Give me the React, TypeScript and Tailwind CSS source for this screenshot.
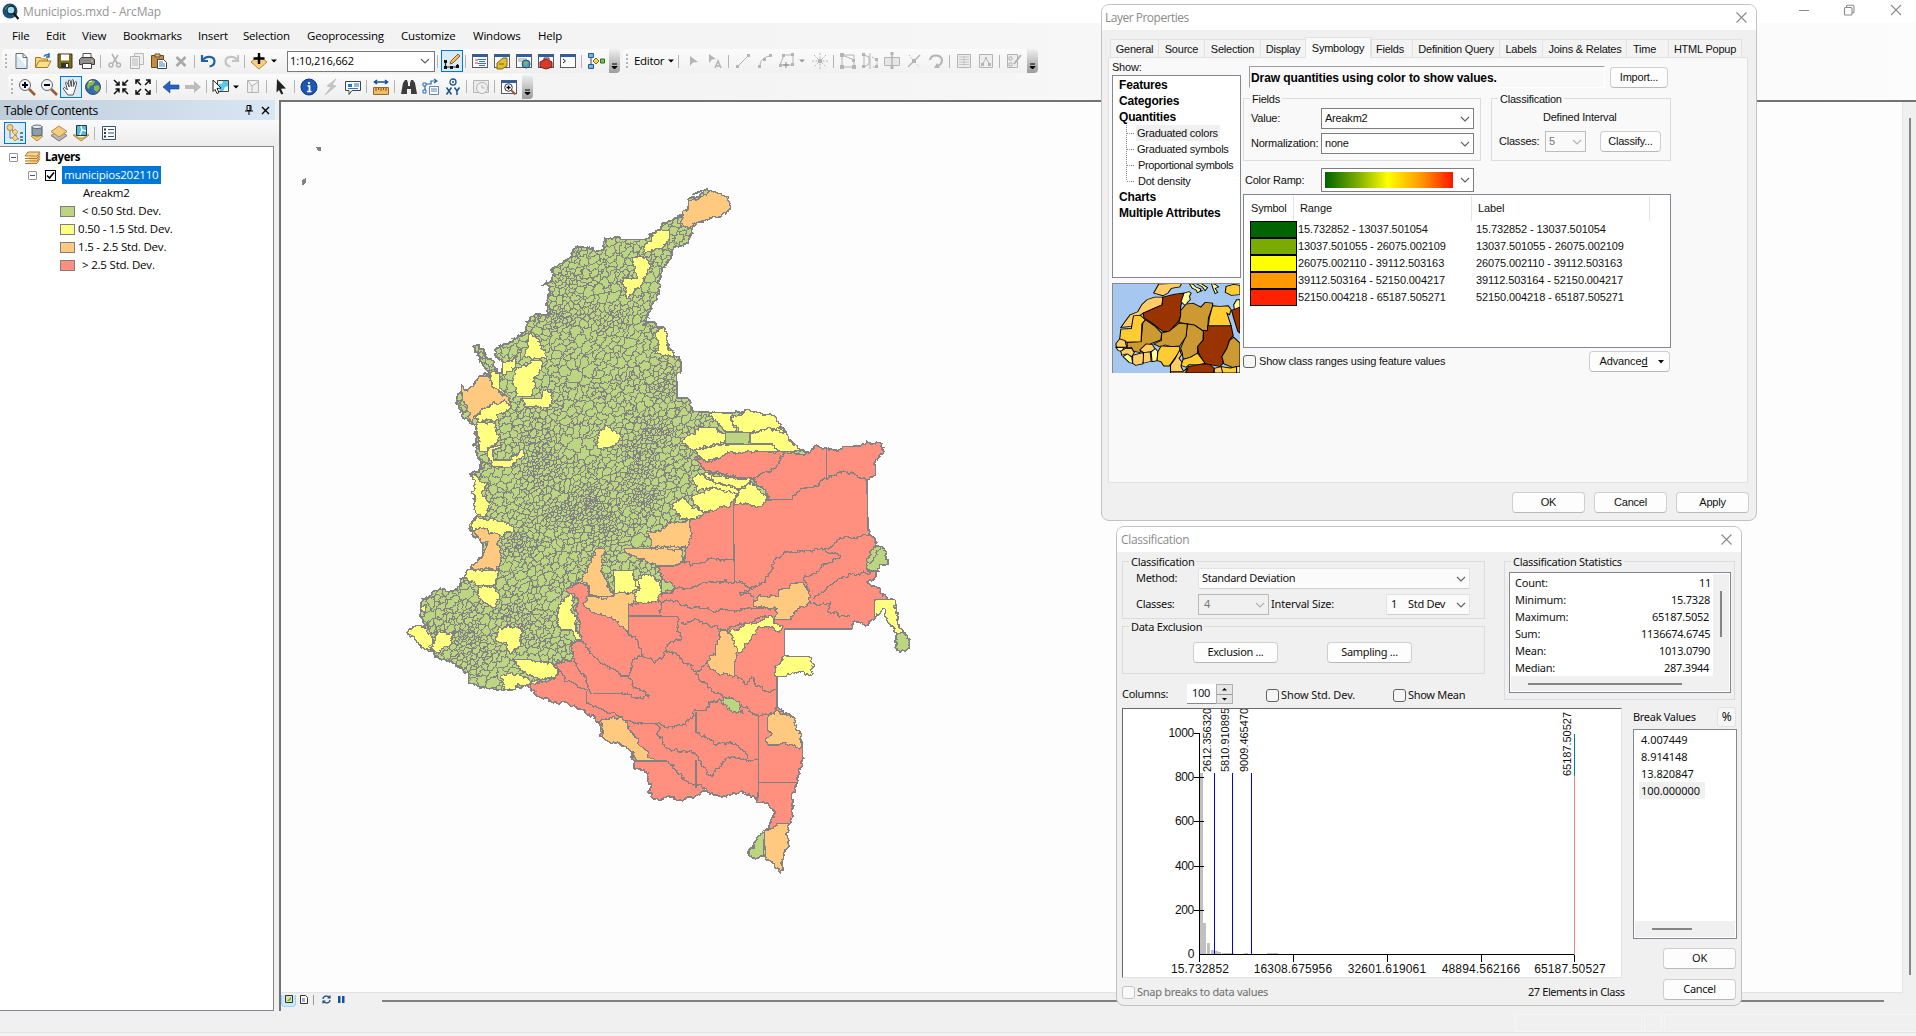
import type { ReactNode } from 'react';

/* ---------- map geometry ---------- */

type Pt = [number, number];

const parse = (s: string, dy = 0): Pt[] =>
  s.trim().split(/\s+/).map((p) => {
    const [x, y] = p.split(',').map(Number);
    return [390 + x / 2.904, 170 + (y + dy) / 3] as Pt;
  });

const hash = (a: number, b: number, c: number, d: number) => {
  const v = Math.sin(a * 12.9898 + b * 78.233 + c * 37.719 + d * 4.581) * 43758.5453;
  return v - Math.floor(v) - 0.5;
};

// Midpoint displacement; symmetric in its end points so that shared borders coincide.
function wiggle(a: Pt, b: Pt, amp: number, minLen: number): Pt[] {
  const dx = b[0] - a[0];
  const dy = b[1] - a[1];
  const len = Math.hypot(dx, dy);
  if (len < minLen) return [a];
  const swap = a[0] > b[0] || (a[0] === b[0] && a[1] > b[1]);
  const [p, q] = swap ? [b, a] : [a, b];
  const r = (n: number) => Math.round(n);
  const h = hash(r(p[0]), r(p[1]), r(q[0]), r(q[1])) * amp * Math.min(len, 3.2 + len * 0.08) * (swap ? -1 : 1);
  const m: Pt = [(a[0] + b[0]) / 2 - (dy / len) * h, (a[1] + b[1]) / 2 + (dx / len) * h];
  return [...wiggle(a, m, amp, minLen), ...wiggle(m, b, amp, minLen)];
}

function roughPath(pts: Pt[], closed: boolean) {
  const out: Pt[] = [];
  const n = closed ? pts.length : pts.length - 1;
  for (let i = 0; i < n; i++) {
    const a = pts[i];
    const b = pts[(i + 1) % pts.length];
    const straight = Math.abs(a[0] - b[0]) < 1.2 || Math.abs(a[1] - b[1]) < 1.2;
    out.push(...(straight ? [a] : wiggle(a, b, 0.95, 1.8)));
  }
  if (!closed) out.push(pts[pts.length - 1]);
  return 'M' + out.map((p) => p[0].toFixed(1) + ' ' + p[1].toFixed(1)).join('L') + (closed ? 'Z' : '');
}

const COUNTRY =
  '925,62 945,66 975,80 989,108 988,118 960,140 915,152 888,160 875,195 858,223 832,228 815,262 790,300 780,340 775,385 755,425 735,465 768,455 775,470 797,472 808,520 830,560 845,575 845,605 832,610 834,683 866,685 880,724 925,727 1000,728 1045,720 1112,738 1150,785 1195,842 1212,846 1235,827 1268,835 1320,830 1365,828 1385,814 1423,818 1432,850 1410,885 1410,915 1385,930 1388,1080 1398,1097 1412,1128 1430,1130 1448,1173 1418,1202 1385,1238 1420,1252 1442,1285 1462,1290 1475,1340 1490,1385 1505,1425 1500,1440 1480,1447 1468,1425 1475,1390 1445,1345 1430,1310 1408,1340 1378,1365 1345,1355 1340,1377 1145,1377 1145,1460 1123,1500 1123,1612 1175,1650 1180,1680 1198,1725 1198,1760 1183,1837 1162,1960 1133,2107 1090,2055 1068,2064 1043,2056 1087,1982 1120,1925 1090,1900 1067,1890 1020,1863 965,1880 915,1855 885,1880 850,1893 815,1880 778,1888 752,1870 758,1842 750,1810 708,1795 710,1773 700,1745 650,1715 615,1700 605,1655 580,1630 540,1610 505,1595 490,1602 430,1580 397,1545 345,1560 285,1555 228,1538 228,1510 195,1490 140,1460 112,1445 50,1388 75,1368 105,1370 88,1330 90,1300 125,1265 195,1260 210,1225 235,1190 268,1155 270,1120 240,1090 230,1075 255,1035 245,920 232,910 262,895 255,850 238,825 255,815 250,770 232,758 210,740 192,700 195,680 210,665 208,645 225,665 258,620 290,615 268,580 245,545 252,525 275,555 300,580 305,615 325,610 328,575 305,540 345,520 395,480 405,445 425,432 465,435 455,400 468,350 455,340 470,325 480,290 525,250 555,230 600,243 620,240 625,205 655,200 670,208 740,208 790,165 845,140 865,120 868,92 900,75';

const RED =
  '885,862 930,875 975,850 1060,843 1145,850 1212,846 1235,827 1268,835 1320,830 1365,828 1385,814 1423,818 1432,850 1410,885 1410,915 1385,930 1388,1080 1398,1097 1412,1128 1385,1175 1390,1205 1418,1202 1385,1238 1420,1252 1442,1285 1430,1310 1408,1340 1378,1365 1345,1355 1340,1377 1145,1377 1145,1460 1123,1500 1123,1612 1175,1650 1180,1680 1198,1725 1198,1760 1183,1837 1162,1960 1125,1960 1087,1982 1120,1925 1090,1900 1067,1890 1020,1863 965,1880 915,1855 885,1880 850,1893 815,1880 778,1888 752,1870 758,1842 750,1810 708,1795 710,1773 700,1745 650,1715 615,1700 605,1655 580,1630 540,1610 505,1595 490,1602 430,1580 397,1545 480,1525 490,1505 470,1485 530,1465 525,1430 555,1415 530,1270 515,1265 545,1235 570,1245 580,1280 700,1290 780,1275 790,1240 782,1190 850,1175 870,1050 910,1030 1000,990 1100,990 1060,935 1055,925 930,910';

const ORANGE_N = [
  '925,62 945,66 975,80 989,108 988,118 960,140 915,152 880,160 872,175 850,170 845,150 865,120 868,92 900,85',
  '208,645 225,665 258,620 285,620 300,655 335,675 350,712 325,695 290,705 255,735 240,760 230,755 225,715 210,690',
];
const ORANGE_S = [
  '745,95 800,80 870,60 872,95 860,145 820,150 757,145 760,120',
  '680,145 757,145 850,150 845,185 820,198 770,198 735,175 700,170',
  '600,145 620,145 615,200 650,285 580,290 572,250 545,240 575,200',
  '570,290 650,288 705,280 715,305 692,312 692,398 650,360 600,340 562,315',
  '1055,300 1075,285 1128,290 1130,268 1160,265 1163,250 1200,248 1222,310 1190,320 1165,357 1115,360 1125,325 1055,320',
  '960,390 975,390 1008,455 1000,495 1002,528 950,520 917,490 945,465 945,435',
  '1120,622 1175,660 1180,690 1196,735 1190,748 1150,728 1130,735 1098,735 1092,715 1108,705 1095,690 1095,660',
  '610,665 668,650 710,704 768,783 712,783 700,755 650,725 618,712',
  '1087,992 1125,970 1162,970 1133,1117 1090,1065',
  '245,92 265,85 310,100 318,140 322,185 300,210 232,205 270,165 285,125 262,128',
];
const YELLOW_N = [
  '735,248 750,215 785,178 812,188 810,215 780,238',
  '700,262 735,260 757,285 735,335 700,375 688,385 678,345 685,325 718,320 712,290',
  '765,485 797,472 808,520 828,560 800,555 770,550 778,510',
  '402,495 435,508 440,530 452,565 435,570 390,555 400,525',
  '328,575 365,562 365,590 350,605 328,615',
  '410,570 440,572 435,610 418,625 412,680 370,680 357,645 362,605 395,590',
  '378,685 440,685 445,660 468,665 475,700 445,720 425,708 390,710',
  '285,630 300,605 318,622 318,655 330,670 300,658',
  '250,740 290,705 325,695 350,712 345,725 310,735 315,750 255,755',
  '252,760 305,755 318,800 305,820 280,845 265,845',
  '285,830 325,825 298,840 300,870 350,870 388,830 390,860 345,892 300,890 282,860',
  '610,780 632,767 672,800 655,822 620,840 597,825 605,805',
  '925,735 945,728 995,730 990,745 1015,785 970,783',
  '988,745 1045,720 1112,738 1148,787 1080,778 1050,788 1012,785',
  '850,820 900,772 945,772 975,795 972,820 885,842',
  '1048,790 1080,778 1150,787 1195,842 1135,845 1110,822 1048,820',
  '885,842 975,825 1110,822 1135,845 1060,843 975,850 925,875',
  '905,910 1045,925 1050,935 1010,958 950,940',
  '880,930 905,912 950,940 1015,958 1010,975 950,955 890,965',
  '875,990 915,962 950,955 1010,975 995,995 910,1028',
  '1000,1000 1025,955 1050,935 1075,965 1102,990 1070,1010 1000,1005',
  '820,1000 850,980 910,1028 880,1050 840,1045',
  '245,912 262,935 288,940 265,970 295,1000 275,1040 255,1035',
];
const YELLOW_S = [
  '230,80 255,45 300,60 345,70 358,90 330,108 280,95 245,92',
  '215,235 235,205 270,212 318,210 305,255 255,258',
  '258,262 300,255 320,290 305,322 262,300',
  '50,398 75,378 108,385 110,365 122,410 125,440 112,455',
  '112,440 145,395 185,400 180,430 140,458',
  '305,420 315,385 340,375 385,395 380,430 350,465 340,432',
  '490,320 525,280 532,340 555,420 540,420 528,390 495,390',
  '355,480 410,478 490,510 480,535 435,542 415,525 375,512',
  '320,530 375,522 435,545 370,550 355,572 335,568',
  '650,210 705,212 710,240 725,265 705,280 652,288',
  '712,245 750,225 788,245 780,295 720,308 705,280 725,270',
  '978,400 1030,370 1110,350 1115,370 1140,385 1130,397 1070,380 1010,455',
  '1408,300 1460,297 1475,350 1490,395 1472,400 1445,355 1435,325 1408,350',
  '88,325 105,315 103,338',
];
const GREEN_N = ['975,787 1045,787 1042,823 975,820'];
const GREEN_S = [
  '1385,190 1430,140 1448,183 1418,212 1390,210',
  '1470,435 1475,400 1490,398 1505,435 1500,450 1480,457',
  '960,600 985,592 1015,605 1025,640 985,625',
  '1043,1066 1087,995 1085,1065 1068,1074',
  '788,235 828,265 790,285',
];
const BORDERS_N = [
  '1145,850 1125,895 1100,905 1055,925',
  '1055,925 1065,965 1100,990 1165,988 1195,955 1230,952 1265,925 1310,908 1385,930',
  '997,990 1000,1235',
  '1267,835 1267,925',
  '925,908 990,918 1050,922',
];
const BORDERS_S = [
  '840,185 870,192 930,175 1000,185',
  '790,285 830,265 905,250 1000,245 1060,262 1090,240 1110,200 1115,180 1165,155 1265,150 1320,110 1398,105',
  '1265,150 1308,170 1250,205 1200,235 1215,290',
  '1228,295 1270,260 1320,230 1418,212',
  '1055,262 1015,280 1055,295',
  '692,315 780,300 905,325 975,330 1055,325 1125,322',
  '692,348 780,348 835,350 845,410 810,430 800,455 765,485 735,470 692,398',
  '845,370 890,358 975,390 1060,358 1110,350',
  '780,340 790,310',
  '1228,310 1280,305 1270,335 1335,348',
  '800,455 835,465 870,490 900,540 945,580 990,595 1070,650 1120,630',
  '1002,528 1030,550 1050,530 1060,555 1105,580 1123,570',
  '890,515 917,490',
  '555,425 600,475 670,528 690,528 705,480 735,470',
  '690,528 750,590 720,595 670,580 588,580',
  '530,475 560,520 588,580',
  '470,490 505,540 570,575 570,605 665,650 735,670 775,672 820,683 860,675 890,632 920,630 925,612 960,600',
  '775,672 797,740 875,752 910,800 937,830 980,772 1070,780',
  '889,698 945,735 990,730 1040,775',
  '805,783 870,850 915,865',
  '712,783 805,783',
  '1070,650 1070,847 1068,900',
  '1070,847 1183,847',
  '889,635 889,698',
  '889,780 889,865',
  '1145,387 1145,470',
];
const LETICIA = '1115,500 1150,468 1218,470 1228,490 1232,520 1190,515 1150,530 1125,530';

// Centres of small municipalities: x, y, spread x, spread y
const CLUSTERS = [
  [535, 325, 45, 35], [490, 440, 45, 40], [550, 250, 20, 22], [430, 880, 60, 130],
  [590, 1000, 65, 80], [720, 880, 60, 100], [740, 980, 55, 60], [630, 1060, 60, 70],
  [800, 660, 35, 60], [230, 1400, 50, 50], [250, 1480, 40, 30], [370, 1350, 50, 60],
  [380, 1120, 50, 60], [520, 1030, 60, 70], [640, 450, 60, 30], [780, 780, 50, 50],
];

function spacing(x: number, y: number) {
  let g = 0;
  for (const [cx, cy, sx, sy] of CLUSTERS) {
    const v = Math.exp(-(((x - cx) / sx) ** 2 + ((y - cy) / sy) ** 2) * 0.7);
    if (v > g) g = v;
  }
  return 8.4 - 5 * g;
}

const SKEW = 0.34;

function municipalMesh() {
  let seed = 20211;
  const rnd = () => {
    seed = (seed * 16807) % 2147483647;
    return seed / 2147483647;
  };
  const pts: Pt[] = [];
  for (let i = 0; i < 19000; i++) {
    const u = 40 + rnd() * 920;
    const v = 130 + rnd() * 1440;
    const s = spacing(u, v);
    if (rnd() > (3.4 / s) ** 2) continue;
    const r = s * 0.34;
    const p: Pt = [390 + u / 2.904, 170 + v / 3];
    if (pts.every((q) => Math.abs(q[0] - p[0]) > r || Math.abs(q[1] - p[1]) > r)) pts.push(p);
  }
  const norm = (a: Pt) => a[0] * a[0] + a[1] * a[1] + 2 * SKEW * a[0] * a[1];
  let d = '';
  for (let i = 0; i < pts.length; i++) {
    const p = pts[i];
    let poly: Pt[] = [[p[0] - 20, p[1] - 20], [p[0] + 20, p[1] - 20], [p[0] + 20, p[1] + 20], [p[0] - 20, p[1] + 20]];
    for (let k = 0; k < pts.length; k++) {
      const q = pts[k];
      const ex = q[0] - p[0];
      const ey = q[1] - p[1];
      if (k === i || Math.abs(ex) > 40 || Math.abs(ey) > 40) continue;
      const dx = ex + SKEW * ey;
      const dy = ey + SKEW * ex;
      const c = (norm(q) - norm(p)) / 2;
      const next: Pt[] = [];
      for (let j = 0; j < poly.length; j++) {
        const a = poly[j];
        const b = poly[(j + 1) % poly.length];
        const sa = dx * a[0] + dy * a[1] - c;
        const sb = dx * b[0] + dy * b[1] - c;
        if (sa <= 0) next.push(a);
        if (sa <= 0 !== sb <= 0) {
          const t = sa / (sa - sb);
          next.push([a[0] + (b[0] - a[0]) * t, a[1] + (b[1] - a[1]) * t]);
        }
      }
      poly = next;
    }
    const out: Pt[] = [];
    poly.forEach((a, j) => out.push(...wiggle(a, poly[(j + 1) % poly.length], 1.1, 2.4)));
    d += 'M' + out.map((a) => a[0].toFixed(1) + ' ' + a[1].toFixed(1)).join('L') + 'Z';
  }
  return d;
}

const MESH = municipalMesh();
const OUTLINE = roughPath(parse(COUNTRY), true);
const closed = (list: string[], dy: number) => list.map((s) => roughPath(parse(s, dy), true)).join('');
const open = (list: string[], dy: number) => list.map((s) => roughPath(parse(s, dy), false)).join('');

function ColombiaMap() {
  return (
    <svg className="block" width="1621" height="891" viewBox="281 102 1621 891" shapeRendering="crispEdges" stroke="#828282" strokeWidth="1.15">
      <defs>
        <clipPath id="land">
          <path d={OUTLINE} />
        </clipPath>
      </defs>
      <path d={OUTLINE} fill="#bcd580" strokeWidth="1.6" />
      <path d={MESH} fill="none" clipPath="url(#land)" strokeWidth="1" />
      <path d={roughPath(parse(RED), true)} fill="#ff8f7f" strokeWidth="1.4" />
      <path d={open(BORDERS_N, 0) + open(BORDERS_S, 990)} fill="none" strokeWidth="1.25" />
      <path d={closed([LETICIA], 990)} fill="#ffff80" />
      <path d={closed(YELLOW_N, 0) + closed(YELLOW_S, 990)} fill="#ffff80" />
      <path d={closed(ORANGE_N, 0) + closed(ORANGE_S, 990)} fill="#ffca80" />
      <path d={closed(GREEN_N, 0) + closed(GREEN_S, 990)} fill="#bcd580" />
      <path d="M692 195l5-3 6-2-5 3z M317 148l3 0 0 2-2 0z M302 184l1-4 2-1 0 4-2 2z M541 286l5-2 1-4M494 370l3 2 0-4" fill="#828282" />
    </svg>
  );
}

/* ---------- toolbar icons ---------- */

const I = ({ children, on, w = 18 }: { children: ReactNode; on?: boolean; w?: number }) => (
  <span className={'flex h-[22px] w-[22px] shrink-0 items-center justify-center ' + (on ? 'border border-[#0078d7] bg-[#d9ebf9]' : '')}>
    <svg width={w} height={w} viewBox="0 0 18 18" fill="none" className="block shrink-0">
      {children}
    </svg>
  </span>
);
const Sep = () => <span className="ml-[2px] mr-[3px] h-[13px] w-px shrink-0 bg-[#b4b4b4]" />;
const Caret = () => (
  <svg width="8" height="8" viewBox="0 0 8 8" className="shrink-0">
    <path d="M1 2.500h6L4 5.500z" fill="#000" />
  </svg>
);
const CaretDim = () => (
  <svg width="8" height="8" viewBox="0 0 8 8" className="shrink-0">
    <path d="M1 2.500h6L4 5.500z" fill="#999" />
  </svg>
);
const Overflow = () => (
  <span className="ml-[2px] flex h-[24px] w-[11px] shrink-0 flex-col items-center justify-end rounded-r-sm bg-gradient-to-b from-[#efefef] to-[#9c9c9c] pb-[3px]">
    <svg width="7" height="7" viewBox="0 0 7 7">
      <path d="M1 1h5M1 3.500h5L3.500 6z" stroke="#000" strokeWidth="1" fill="#000" />
    </svg>
  </span>
);
const Grip = () => (
  <span className="mx-[3px] flex h-[15px] w-[2px] shrink-0 flex-col justify-between">
    <i className="h-[2px] bg-[#b5b5b5]" /><i className="h-[2px] bg-[#b5b5b5]" /><i className="h-[2px] bg-[#b5b5b5]" /><i className="h-[2px] bg-[#b5b5b5]" />
  </span>
);
const Chevron = ({ dim }: { dim?: boolean }) => (
  <svg width="10" height="6" viewBox="0 0 10 6" className="shrink-0">
    <path d="M1 1l4 4 4-4" fill="none" stroke={dim ? '#b0b0b0' : '#606060'} strokeWidth="1.1" />
  </svg>
);

const Win = ({ children }: { children?: ReactNode }) => (
  <>
    <rect x="1.500" y="2.500" width="15" height="13" fill="#fdfdfd" stroke="#5a5a5a" />
    <path d="M2 3h14v2H2z" fill="#1f5fbf" />
    {children}
  </>
);

const layerD = 'M9 2l8 5.500-8 5.500-8-5.500z';

function StandardBar() {
  return (
    <div className="flex h-[24px] items-center rounded bg-gradient-to-b from-[#fbfbfb] to-[#efefef]">
      <Grip />
      <I><path d="M4 1.500h7l4 4v11H4z" fill="#fff" stroke="#5b6b7b" /><path d="M5 3l9 11v2H5z" fill="#dce9f5" /><path d="M11 1.500v4h4" stroke="#5b6b7b" /></I>
      <I><path d="M1.500 15.500v-10h5l1 1.500h6v2" fill="#f5d47c" stroke="#a47c20" /><path d="M1.500 15.500l3.500-6.500h12l-3.500 6.500z" fill="#fbdf90" stroke="#a47c20" /><path d="M10 4.500c1-2 3-2 5-1.500M15 1v4h-3" stroke="#2266aa" strokeWidth="1.400" /></I>
      <I><path d="M2 2h14v14H3l-1-1z" fill="#7c6c1c" stroke="#3a3520" /><path d="M5 2.500h8v6H5z" fill="#fff" /><path d="M5 11h8v5H5z" fill="#333" /><path d="M10 12h2v3h-2z" fill="#fff" /></I>
      <I><path d="M5 6V1.500h8V6" fill="#fff" stroke="#555" /><path d="M1.500 7.500l2-2h11l2 2v5h-15z" fill="#8f8f8f" stroke="#3c3c3c" /><path d="M4.500 11.500h9v5h-9z" fill="#fff" stroke="#444" /><path d="M13 9h2" stroke="#e8c020" strokeWidth="1.500" /></I>
      <Sep />
      <I><path d="M6 2l5 9M12 3L7 11" stroke="#b4b4b4" strokeWidth="1.600" /><circle cx="5" cy="13" r="2" stroke="#b4b4b4" strokeWidth="1.500" /><circle cx="12.500" cy="13" r="2" stroke="#b4b4b4" strokeWidth="1.500" /></I>
      <I><path d="M6.500 1.500h9v11h-9z" fill="#f0f0f0" stroke="#b8b8b8" /><path d="M2.500 4.500h9v12h-9z" fill="#f0f0f0" stroke="#b0b0b0" /><path d="M4 7h6M4 9h6M4 11h6M4 13h6" stroke="#bbb" /></I>
      <I><path d="M1.500 3.500h12v12h-12z" fill="#c98a3a" stroke="#6b4a20" /><path d="M5 2h5v3H5z" fill="#e6c040" stroke="#555" /><path d="M7.500 7.500h6l3 3v6h-9z" fill="#fff" stroke="#345" /><path d="M9 10h4M9 12h6M9 14h6" stroke="#4a78b8" /></I>
      <I><path d="M4.500 5l9 9M13.500 5l-9 9" stroke="#a8a8a8" strokeWidth="2.600" /></I>
      <Sep />
      <I><path d="M2 3v6h6M2.500 8.500C6 3 14 4 14.500 9c0 3-2 5-5 5.500" stroke="#2263a8" strokeWidth="2.200" /></I>
      <I><path d="M16 3v6h-6M15.500 8.500C12 3 4 4 3.500 9c0 3 2 5 5 5.500" stroke="#c4c4c4" strokeWidth="2.200" /></I>
      <Sep />
      <I><path d="M9 4l8 6-8 7-8-7z" fill="#f6ce7e" stroke="#b98a35" /><path d="M9 1v11M3.500 6.500h11" stroke="#000" strokeWidth="2.400" /></I>
      <Caret />
      <div className="ml-[9px] flex h-[21px] w-[148px] items-center justify-between border border-[#7a7a7a] bg-white pl-[2px] pr-[4px] text-[11px] tracking-[-0.1px]">
        <span>1:10,216,662</span>
        <Chevron />
      </div>
      <Sep />
      <I on><path d="M2.500 9v6h12v-3" stroke="#222" strokeWidth="1.200" /><path d="M1 8h3v3H1zM1 14h3v3H1zM7 14h3v3H7zM13 13h3v3h-3z" fill="#111" /><path d="M7 12l1-3 7-7 2 2-7 7z" fill="#f0bd62" stroke="#8a5a20" /></I>
      <Sep />
      <I><Win><path d="M4 8h3M4 11h3" stroke="#d33" /><path d="M7 7.500h8M8 9.500h6M7 11.500h8M8 13.500h6" stroke="#3a70c0" /></Win></I>
      <I><Win><path d="M4 11l6-5h4v8l-5 3H4z" fill="#e2be2e" stroke="#7d6510" /><path d="M6 12h5" stroke="#7d6510" /></Win></I>
      <I><Win><path d="M3 7h9M3 9h5" stroke="#999" /><circle cx="11" cy="12" r="4" fill="#4f9ac8" stroke="#1d4e78" /><path d="M9 11l2-2 2 2-2 3z" fill="#6fbf58" /></Win></I>
      <I><Win><path d="M3 10l6-3 6 3v5l-6 2-6-2z" fill="#d83a30" stroke="#7c1712" /><path d="M7 8V6h5v2" stroke="#7c1712" /></Win></I>
      <I><Win><path d="M4 7l2.500 2L4 11" stroke="#222" /></Win></I>
      <Sep />
      <I><path d="M4 4v10M6 9h6" stroke="#444" /><path d="M1.500 1.500h5v4h-5zM1.500 12.500h5v4h-5z" fill="#6fb5ea" stroke="#225a92" /><path d="M9 6l3 3-3 3-3-3z" fill="#f4d35c" stroke="#8a6a18" /><path d="M13.500 7h4v4h-4z" fill="#7cc757" stroke="#2c6a1c" /></I>
      <Overflow />
    </div>
  );
}

const G = '#b4b4b4';
function EditorBar() {
  return (
    <div className="ml-[3px] flex h-[24px] items-center rounded bg-gradient-to-b from-[#fbfbfb] to-[#f1f1f1]">
      <Grip />
      <span className="ml-[3px] w-[33px] text-[11.500px] tracking-[-0.3px]">Editor</span>
      <Caret />
      <span className="w-px" />
      <Sep />
      <I><path d="M6 4l8 6-5 .5L6 14z" fill={G} /></I>
      <I><path d="M3 2l7 5-4 .5L3 11z" fill={G} /><path d="M9 16l3-7 3 7M10 14h4" stroke={G} strokeWidth="1.500" /></I>
      <Sep />
      <I><path d="M4 14L14 4" stroke={G} /><path d="M2 13h3v3H2zM13 2h3v3h-3z" fill={G} /></I>
      <I><path d="M4 14c0-6 4-9 10-10" stroke={G} /><path d="M2 13h3v3H2zM7 6h3v3H7zM13 2h3v3h-3z" fill={G} /></I>
      <I><path d="M6 3h9v10H2z" stroke={G} /><path d="M4 2h3v3H4zM13 1h3v3h-3zM13 11h3v3h-3zM1 12h3v3H1z" fill={G} /><path d="M8 10v6M5 13h6" stroke="#888" /></I>
      <CaretDim />
      <span className="w-[3px]" />
      <I><path d="M9 1v16M1 9h16M3 3l12 12M15 3L3 15" stroke={G} strokeDasharray="2 1.500" /><path d="M7 7h4v4H7z" fill={G} /></I>
      <Sep />
      <I><path d="M3 3v12h12V8zM3 3h12v5" stroke={G} /><path d="M1 1h4v4H1zM13 13h4v4h-4zM1 13h4v4H1zM13 7h3v3h-3z" fill={G} /></I>
      <I><path d="M3 3v12l5-3V5zM9 1v16" stroke={G} /><path d="M11 5l5 3v7h-5" stroke={G} strokeDasharray="2 1" /><path d="M1 1h3v3H1zM1 13h3v3H1zM14 6h3v3h-3zM14 13h3v3h-3z" fill={G} /></I>
      <I><path d="M1.500 5.500h15v8h-15z" fill="#e6e6e6" stroke={G} /><path d="M9 1v16" stroke={G} strokeWidth="1.500" /><path d="M7.500 0h3v3h-3zM7.500 14h3v3h-3z" fill={G} /></I>
      <I><path d="M3 15L15 3" stroke={G} strokeWidth="1.400" /><path d="M4 3l10 12" stroke={G} strokeDasharray="1.500 1.500" /><path d="M7 7h4v4H7z" fill={G} /></I>
      <I><path d="M3 8c1-6 11-6 12 0 0 3-2 5-4 6" stroke={G} strokeWidth="2" /><path d="M13 16H7l3-5z" fill={G} /></I>
      <Sep />
      <I><path d="M2.500 2.500h13v13h-13z" fill="#eee" stroke={G} /><path d="M4 5h10M4 7.500h10M4 10h10M4 12.500h10M9 4v10" stroke="#c4c4c4" /></I>
      <I><path d="M2.500 2.500h13v13h-13z" fill="#eee" stroke={G} /><path d="M5 13l4-7 4 7" stroke={G} /><path d="M4 11h3v3H4zM8 5h2v2H8zM11 11h3v3h-3z" fill={G} /></I>
      <Sep />
      <I><path d="M2.500 2.500h10v13h-10z" fill="#eee" stroke={G} /><path d="M4 5h3v3H4zM4 11h3v3H4z" stroke={G} /><path d="M9 12l7-9" stroke={G} strokeWidth="2" /></I>
      <Overflow />
    </div>
  );
}

function ToolsBar() {
  return (
    <div className="flex h-[25px] w-[525px] items-center rounded bg-gradient-to-b from-[#fbfbfb] to-[#efefef]">
      <Grip />
      <I><circle cx="7" cy="7" r="5.500" fill="#eef4fa" stroke="#666" /><path d="M4 7h6M7 4v6" stroke="#000" strokeWidth="2" /><path d="M11 11l6 6" stroke="#9b5a3a" strokeWidth="2.600" /></I>
      <I><circle cx="7" cy="7" r="5.500" fill="#eef4fa" stroke="#666" /><path d="M4 7h6" stroke="#000" strokeWidth="2" /><path d="M11 11l6 6" stroke="#9b5a3a" strokeWidth="2.600" /></I>
      <I on><path d="M6 17l-4.500-6c-.5-1.500 1-2 2-1l2 2L3.500 5c0-1.200 1.300-1.300 1.700-.3l2 4.300L6.500 3c0-1.300 1.500-1.300 1.800 0l1 5.500.5-6c.2-1.300 1.700-1.100 1.700.2l-.2 6 1.700-4.500c.5-1.200 1.900-.7 1.700.5L13 11.500c-.3 2-1.500 3.500-2 5.500z" fill="#fff" stroke="#444" strokeWidth=".9" /></I>
      <I><circle cx="9" cy="9" r="7.500" fill="#2f6cb0" stroke="#37506a" /><path d="M4 5c2-3 6-3 7-1l-2 3-3 1-1 3-2-2zM10 8l4-1 2 3-3 4-3-2z" fill="#8fb83e" /><path d="M5 4l3-1" stroke="#fff" /></I>
      <Sep />
      <I><path d="M2 2l5 5M7 3.500V7H3.500M16 2l-5 5M11 3.500V7h3.500M2 16l5-5M3.500 11H7v3.500M16 16l-5-5M14.500 11H11v3.500" stroke="#111" strokeWidth="1.500" /></I>
      <I><path d="M7 7L2 2M2 6V2h4M11 7l5-5M12 2h4v4M7 11l-5 5M2 12v4h4M11 11l5 5M16 12v4h-4" stroke="#111" strokeWidth="1.500" /></I>
      <Sep />
      <span className="w-px" />
      <I><path d="M1 9l7-6v4h9v4H8v4z" fill="#2a62c4" stroke="#174089" strokeWidth=".6" /></I>
      <I><path d="M17 9l-7-6v4H1v4h9v4z" fill="#bcbcbc" /></I>
      <Sep />
      <I><path d="M5.500 2.500h11v11h-11z" fill="#eef6f8" stroke="#444" /><path d="M6 6h4l1-3h5v5l-3 1-2 4H8z" fill="#56cbe6" /><path d="M1 2l8 8-4 .5 2 4-2 1-2-4-2 2z" fill="#fff" stroke="#222" /></I>
      <Caret />
      <span className="w-[5px]" />
      <I><path d="M3.500 2.500h11v12h-11zM4 3l4 5 6-4M8 8v6" stroke={G} fill="#eee" /></I>
      <Sep />
      <I><path d="M5 1l9 9.500-5 .3 2.300 5-2 .8L7 12l-2.500 2.500z" fill="#222" /></I>
      <Sep />
      <I><circle cx="9" cy="9" r="8" fill="#1c57b4" stroke="#123a7a" /><path d="M9 4v2M7.500 8H9.500v5M7 13.500h4.500" stroke="#fff" strokeWidth="1.700" /></I>
      <I><path d="M14 1L5 8l4 1-6 8 11-9-4-1z" fill="#c6c6c6" stroke="#b0b0b0" strokeWidth=".6" /></I>
      <I><path d="M1.500 3.500h15v9H8l-3 4v-4H1.500z" fill="#f6fbff" stroke="#444" /><path d="M4 6h4v3H4z" fill="#2f77bf" /><path d="M10 6h5M10 8h5M4 10.500h10" stroke="#2f77bf" /></I>
      <Sep />
      <I><path d="M3 4h12M5 2L2.500 4 5 6M13 2l2.500 2L13 6" stroke="#15509a" strokeWidth="1.600" /><path d="M1.500 9.500h15v7h-15z" fill="#f0bb68" stroke="#9a6a24" /><path d="M4 10v3M6.500 10v2M9 10v3M11.500 10v2M14 10v3" stroke="#7a5218" /></I>
      <Sep />
      <I><path d="M3 5l2-3h2l1 3v3h2V5l1-3h2l2 3 2 11h-6v-5H7v5H1z" fill="#3c3c3c" /></I>
      <I><path d="M3 13V6h6V3h6M12 1l3 2-3 2" stroke="#2a69a8" strokeWidth="1.200" /><path d="M7.500 8.500h9v8h-9z" fill="#fff" stroke="#5a88b0" /><path d="M9 11h6M9 13h6" stroke="#5a88b0" /><path d="M1 5h3v3H1zM1 12h3v3H1z" fill="#fff" stroke="#2a69a8" /></I>
      <I><circle cx="9" cy="4" r="3" stroke="#1b5590" strokeWidth="1.300" /><path d="M8.500 3.500h1v1h-1z" stroke="#1b5590" /><path d="M2.500 9.500l5 7M7.500 9.500l-5 7M10.500 9.500l2.500 3.500 2.500-3.500M13 13v4" stroke="#1b5590" strokeWidth="1.500" /></I>
      <Sep />
      <I><path d="M1.500 2.500h15v12h-15z" fill="#ececec" stroke={G} /><circle cx="10" cy="10" r="5.500" fill="#f0f0f0" stroke={G} /><path d="M10 7v3h3" stroke={G} /></I>
      <Sep />
      <I><Win><circle cx="8.500" cy="9.500" r="3.800" fill="#fff" stroke="#333" /><path d="M6.500 9.500h4M8.500 7.500v4" stroke="#000" strokeWidth="1.300" /><path d="M11.500 12.500l4 4" stroke="#9b5a3a" strokeWidth="2" /></Win></I>
      <Overflow />
    </div>
  );
}

/* ---------- table of contents ---------- */

const Minus = () => (
  <span className="flex h-[9px] w-[9px] shrink-0 items-center justify-center rounded-[1px] border border-[#969696] bg-white">
    <i className="h-px w-[5px] bg-[#3a5a9a]" />
  </span>
);

const TOC_CLASSES: [string, string, string][] = [
  ['bg-[#bcd580]', 'ml-[7px]', '< 0.50 Std. Dev.'],
  ['bg-[#ffff80]', 'ml-[3px]', '0.50 - 1.5 Std. Dev.'],
  ['bg-[#ffca80]', 'ml-[3px]', '1.5 - 2.5 Std. Dev.'],
  ['bg-[#ff8f7f]', 'ml-[7px]', '> 2.5 Std. Dev.'],
];

function Toc() {
  return (
    <aside className="flex w-[279px] shrink-0 flex-col text-[11.500px] tracking-[-0.2px]">
      <div className="flex h-[20px] w-[275px] items-center bg-gradient-to-r from-[#bfcddb] to-[#d9e6f4] pl-[4px] pr-[5px] pt-px">
        <span className="grow text-[12px] tracking-[-0.4px]">Table Of Contents</span>
        <svg width="8" height="11" viewBox="0 0 8 11" className="mr-[8px]"><path d="M2 .500h4v5H2zM5 .500v5M0 6h8M4 6v4" stroke="#000" fill="none" /></svg>
        <svg width="9" height="9" viewBox="0 0 9 9"><path d="M1 1l7 7M8 1L1 8" stroke="#000" strokeWidth="1.400" /></svg>
      </div>
      <div className="flex h-[26px] items-center bg-gradient-to-b from-[#fafafa] to-[#ececec] pl-[4px]">
        <I on><path d="M4 6v8h4M6 6l4 3M10 10v5h3" stroke="#777" /><circle cx="4" cy="3.500" r="3" fill="#f5cf88" stroke="#b58a3a" /><path d="M9 5l3 3-3 3-3-3zM9 11l3 3-3 3-3-3z" fill="#f5cf88" stroke="#b58a3a" strokeWidth=".8" /><path d="M14 9h3M14 13h3M14 16h3" stroke="#26609c" strokeWidth="1.400" /></I>
        <I><path d="M3 12l6-3 6 3-6 5z" fill="#f2c468" stroke="#b58a3a" /><path d="M4 2.500h10v8c-2 2-8 2-10 0z" fill="#8d9dac" stroke="#4a5866" /><ellipse cx="9" cy="2.800" rx="5" ry="1.800" fill="#e6edf3" stroke="#5d6b78" /></I>
        <I><path d="M9 6l8 5.500L9 17 1 11.500z" fill="#b9b9b9" stroke="#777" /><path d={layerD} fill="#f6cd80" stroke="#b58a3a" /></I>
        <I><path d="M1 11h4v3h8v-3h4l-8 6z" fill="#f2c468" stroke="#b58a3a" /><path d="M4.500 1.500h10v10h-10z" fill="#49bce0" stroke="#333" /><path d="M9 2l1 4 4 1M10 6l-2 5" stroke="#fff" strokeWidth="1.500" /></I>
        <Sep />
        <I><path d="M2.500 2.500h13v13h-13z" fill="#fff" stroke="#35556f" /><path d="M8 5.500h6M8 9h6M8 12.500h6" stroke="#35556f" /><path d="M4 4.500h2v2H4zM4 8h2v2H4zM4 11.500h2v2H4z" fill="#333" /></I>
      </div>
      <div className="flex w-[274px] grow flex-col border border-l-0 border-[#828790] bg-white pt-px leading-[18px]">
        <div className="flex h-[18px] items-center pl-[9px]">
          <Minus />
          <svg width="17" height="15" viewBox="0 0 17 15" className="ml-[6px]"><path d="M1 11h12l3-5M1 13.500h12l3-5M1 8.500h12l3-5M4 2h12l-3 4H1z" stroke="#b07a28" fill="#f8d38b" /></svg>
          <b className="ml-[4px] tracking-[-0.45px]">Layers</b>
        </div>
        <div className="flex h-[18px] items-center pl-[28px]">
          <Minus />
          <span className="ml-[8px] mr-[6px] flex h-[11px] w-[11px] items-center justify-center border border-black">
            <svg width="9" height="9" viewBox="0 0 9 9"><path d="M1 4.500l2.500 2.500L8 1.500" stroke="#000" strokeWidth="1.600" fill="none" /></svg>
          </span>
          <span className="h-[18px] w-[99px] whitespace-nowrap bg-[#0078d7] pl-[2px] tracking-[-0.22px] text-white">municipios202110</span>
        </div>
        <div className="h-[18px] pl-[83px]">Areakm2</div>
        {TOC_CLASSES.map(([bg, ml, t]) => (
          <div key={t} className="flex h-[18px] items-center pl-[60px]">
            <span className={'h-[11px] w-[15px] border border-[#7e7e7e] ' + bg} />
            <span className={ml}>{t}</span>
          </div>
        ))}
      </div>
    </aside>
  );
}

/* ---------- dialog controls ---------- */

const Btn = ({ children, className }: { children: ReactNode; className: string }) => (
  <span className={'flex shrink-0 items-center justify-center rounded-[4px] border border-[#cfcfcf] border-b-[#b9b9b9] bg-[#fdfdfd] ' + className}>{children}</span>
);
const Box = ({ dim }: { dim?: boolean }) => (
  <span className={'h-[13px] w-[13px] shrink-0 rounded-[3px] border ' + (dim ? 'border-[#c4c4c4] bg-[#f9f9f9]' : 'border-[#626262] bg-[#f6f6f6]')} />
);
const Group = ({ title, className, children }: { title: string; className: string; children: ReactNode }) => (
  <div className={'relative shrink-0 border border-[#dcdcdc] ' + className}>
    <span className="absolute left-[6px] top-[-7px] whitespace-nowrap bg-inherit px-[2px] leading-[14px]">{title}</span>
    {children}
  </div>
);
const CloseX = () => (
  <svg width="11" height="11" viewBox="0 0 11 11"><path d="M.5.5l10 10M10.500.5l-10 10" stroke="#8a8a8a" strokeWidth="1.100" /></svg>
);

const TABS: [string, string][] = [
  ['General', 'w-[48px]'], ['Source', 'w-[46px]'], ['Selection', 'w-[56px]'], ['Display', 'w-[45px]'], ['Symbology', ''],
  ['Fields', 'w-[41px] pr-[4px]'], ['Definition Query', 'w-[87px]'], ['Labels', 'w-[43px]'], ['Joins & Relates', 'w-[84px] pl-px'], ['Time', 'w-[42px] pr-[6px]'], ['HTML Popup', 'w-[74px]'],
];

const RANGES: [string, string][] = [
  ['bg-[#006400]', '15.732852 - 13037.501054'],
  ['bg-[#7aab00]', '13037.501055 - 26075.002109'],
  ['bg-[#ffff00]', '26075.002110 - 39112.503163'],
  ['bg-[#ff9900]', '39112.503164 - 52150.004217'],
  ['bg-[#ff2200]', '52150.004218 - 65187.505271'],
];

const AFRICA: [string, string][] = [
  ['#ffcc66', '128,310 140,283 195,280 190,292 170,296 162,310 150,318'],
  ['#ffff99', '212,281 222,284 228,292 240,298 238,304 244,302 232,309 228,300 220,296'],
  ['#ffff99', '228,281 240,281 256,294 250,303 244,292'],
  ['#ffff99', '265,281 274,284 282,292 274,296 280,308 274,312 270,300'],
  ['#ffcc33', '300,290 318,284 333,287 333,315 312,317 298,308'],
  ['#ffff99', '318,345 325,330 333,330 333,352 320,362'],
  ['#993300', '313,362 333,352 333,430 328,425 318,385'],
  ['#ffcc66', '150,322 148,345 103,370 95,378 75,410 50,413 60,395 72,375 90,366 100,344 112,330 130,322'],
  ['#993300', '150,322 175,314 200,310 198,325 195,335 192,352 192,378 187,395 165,425 150,425 124,400 105,385 103,370 130,355 148,345'],
  ['#ffff99', '200,310 212,306 217,310 213,320 215,330 208,338 205,350 193,336'],
  ['#cc9933', '192,362 205,343 222,340 240,352 250,338 268,340 268,350 258,385 256,422 245,422 225,406 210,402 188,398 192,378'],
  ['#ffcc33', '268,348 285,350 305,348 312,360 308,375 302,370 312,408 258,408 260,385'],
  ['#993300', '256,408 312,408 317,438 308,450 302,475 290,500 293,520 285,530 262,524 250,522 235,490 232,470 246,450 246,422 256,422'],
  ['#cc9933', '208,403 225,406 246,424 245,450 232,470 232,490 215,502 198,508 196,490 192,475 204,440'],
  ['#cc9933', '147,430 165,424 188,400 208,403 205,440 190,468 170,470 155,465 145,472 128,462 146,452'],
  ['#cc9933', '108,390 130,408 147,430 145,450 120,462 105,470 95,488 80,484 75,472 65,475 65,457 98,455 102,400'],
  ['#ffcc33', '78,392 80,378 96,376 108,390 100,402 98,455 65,457 47,450 50,418 75,416'],
  ['#ffcc66', '47,447 60,452 64,472 40,472 38,462'],
  ['#ffff99', '38,472 58,474 52,484 44,482'],
  ['#ffcc66', '50,484 62,475 76,476 82,488 76,500 62,492 52,496'],
  ['#ffff99', '55,500 66,492 76,502 78,520 70,518'],
  ['#ffcc66', '78,496 102,488 106,502 102,522 85,526 78,520'],
  ['#ffcc66', '95,480 110,462 125,464 132,478 120,486 104,488'],
  ['#ffcc66', '104,488 120,486 122,514 103,520'],
  ['#ffff99', '122,486 132,476 138,485 136,512 124,515'],
  ['#ffcc33', '138,485 146,468 165,470 190,470 190,485 178,505 165,528 152,528 145,515 136,512'],
  ['#ffcc66', '190,480 194,495 188,505 196,518 193,530 199,544 168,544 168,525 178,508'],
  ['#ffcc33', '193,526 198,508 215,502 232,490 238,500 250,520 232,525 212,524 205,532'],
  ['#ffcc66', '168,544 199,544 206,535 204,549 168,549'],
  ['#993300', '205,549 210,530 232,525 248,522 262,524 272,535 270,549'],
  ['#cc9933', '302,475 308,452 318,442 333,460 333,530 315,532 295,522 290,500'],
  ['#ffcc33', '288,530 310,534 325,530 325,549 290,549'],
  ['#ffcc66', '272,549 272,535 288,530 292,549'],
  ['#ffff99', '325,530 333,528 333,549 325,549'],
];

function LayerProperties() {
  return (
    <section className="absolute left-[1101px] top-[4px] flex h-[517px] w-[656px] flex-col overflow-hidden rounded-[8px] border border-[#c2c2c2] bg-[#f0f0f0] font-['Liberation_Sans',sans-serif] text-[11px] tracking-[-0.22px] text-[#111]">
      <header className="flex h-[25px] shrink-0 items-center justify-between bg-white pl-[3px] pr-[9px]">
        <span className="font-['Open_Sans',sans-serif] text-[12px] tracking-[-0.5px] text-[#8c8c8c]">Layer Properties</span>
        <CloseX />
      </header>
      <nav className="flex h-[27px] shrink-0 items-end pl-[8px]">
        {TABS.map(([t, w]) =>
          t === 'Symbology' ? (
            <span key={t} className="relative z-10 mb-[-1px] flex h-[21px] w-[66px] justify-center border border-b-0 border-[#e2e2e2] bg-[#f9f9f9] pt-[2px]">{t}</span>
          ) : (
            <span key={t} className={'flex h-[18px] items-center justify-center whitespace-nowrap border-l border-t border-[#e2e2e2] bg-[#f3f3f3] pt-px last:border-r ' + w}>{t}</span>
          ),
        )}
      </nav>
      <div className="ml-[6px] flex h-[426px] w-[640px] shrink-0 border border-[#e2e2e2] bg-[#f9f9f9] pl-[3px]">
        <div className="flex w-[131px] shrink-0 flex-col">
          <div className="h-[17px] leading-[18px]">Show:</div>
          <div className="relative h-[203px] w-[129px] border border-[#828790] bg-white pl-[6px] pt-px leading-[16px]">
            <svg className="absolute left-[13px] top-[49px]" width="10" height="58" viewBox="0 0 10 58"><path d="M.5 0v56M1 8.500h8M1 24.500h8M1 40.500h8M1 56.500h8" stroke="#888" strokeDasharray="1 1" fill="none" /></svg>
            <div className="text-[12px] font-bold tracking-[-0.18px] text-black">
              <div>Features</div><div>Categories</div><div>Quantities</div>
            </div>
            <div className="pl-[17px]">
              <div className="w-[84px] whitespace-nowrap bg-[#f0f0f0] pl-px">Graduated colors</div>
              <div className="pl-px">Graduated symbols</div>
              <div className="whitespace-nowrap pl-[2px] tracking-[-0.38px]">Proportional symbols</div>
              <div className="pl-[2px]">Dot density</div>
            </div>
            <div className="text-[12px] font-bold tracking-[-0.18px] text-black">
              <div>Charts</div><div className="whitespace-nowrap">Multiple Attributes</div>
            </div>
          </div>
          <svg className="mt-[5px] block" width="128" height="90" viewBox="29 280 304 269" preserveAspectRatio="none" shapeRendering="crispEdges">
            <path d="M29 280h304v269H29z" fill="#a6c8f0" />
            {AFRICA.map(([c, p]) => <polygon key={p} points={p} fill={c} stroke="#000" strokeWidth="2.400" />)}
            <path d="M29 280h304v3H29zM29 280h3v269h-3z" fill="#888" />
          </svg>
        </div>
        <div className="flex flex-col">
          <div className="mt-[8px] flex pl-[6px]">
            <div className="flex h-[22px] w-[356px] items-center border border-b-white border-l-[#a0a0a0] border-r-white border-t-[#a0a0a0] pl-px pt-px text-[12px] font-bold tracking-[-0.1px] text-black">Draw quantities using color to show values.</div>
            <Btn className="ml-[5px] mt-px h-[21px] w-[58px]">Import...</Btn>
          </div>
          <div className="mt-[10px] flex gap-[10px]">
            <Group title="Fields" className="flex h-[63px] w-[238px] flex-col gap-[4px] bg-[#f9f9f9] pl-[7px] pt-[9px]">
              {[['Value:', 'Areakm2'], ['Normalization:', 'none']].map(([a, b]) => (
                <div key={a} className="flex h-[21px] items-center">
                  <span className="w-[70px]">{a}</span>
                  <span className="flex h-[21px] w-[153px] items-center justify-between border border-[#7e7e7e] bg-white pl-[3px] pr-[3px]">{b}<Chevron /></span>
                </div>
              ))}
            </Group>
            <Group title="Classification" className="flex h-[63px] w-[180px] flex-col bg-[#f9f9f9] pl-[7px] pt-[10px]">
              <div className="h-[22px] pl-[44px] leading-[16px]">Defined Interval</div>
              <div className="flex h-[21px] items-center">
                <span className="w-[46px]">Classes:</span>
                <span className="flex h-[21px] w-[41px] items-center justify-between border border-[#bdbdbd] pl-[3px] pr-[3px] text-[#777]">5<Chevron dim /></span>
                <Btn className="ml-[14px] h-[21px] w-[61px]">Classify...</Btn>
              </div>
            </Group>
          </div>
          <div className="mt-[7px] flex h-[24px] items-center pl-[2px]">
            <span className="w-[76px]">Color Ramp:</span>
            <span className="flex h-[24px] w-[153px] items-center justify-between border border-[#7e7e7e] bg-white pl-[3px] pr-[3px]">
              <i className="h-[16px] w-[128px] bg-[linear-gradient(to_right,#006400,#7aab00_25%,#ffff00_49%,#ff9900_75%,#ff1500)]" />
              <Chevron />
            </span>
          </div>
          <div className="mt-[2px] h-[154px] w-[428px] border border-[#828790] bg-white pl-[6px] tracking-[-0.1px]">
            <div className="flex h-[26px] pt-px">
              <span className="w-[44px] border-r border-[#e5e5e5] pl-px leading-[24px] tracking-[-0.2px]">Symbol</span>
              <span className="w-[178px] border-r border-[#e5e5e5] pl-[6px] leading-[24px]">Range</span>
              <span className="w-[178px] border-r border-[#e5e5e5] pl-[6px] leading-[24px]">Label</span>
            </div>
            {RANGES.map(([bg, t]) => (
              <div key={t} className="flex h-[17px] items-center">
                <span className={'h-[17px] w-[47px] border border-black ' + bg} />
                <span className="w-[179px] pl-px">{t}</span>
                <span>{t}</span>
              </div>
            ))}
          </div>
          <div className="mt-[3px] flex h-[21px] items-center">
            <Box />
            <span className="ml-[3px] w-[330px] tracking-[-0.2px]">Show class ranges using feature values</span>
            <Btn className="h-[21px] w-[81px] pl-[4px]">
              <span className="tracking-[-0.1px]">Advance<u>d</u></span>
              <svg className="ml-[10px]" width="6" height="4" viewBox="0 0 6 4"><path d="M0 0h6L3 3.500z" fill="#111" /></svg>
            </Btn>
          </div>
        </div>
      </div>
      <footer className="flex items-start gap-[9px] pl-[410px] pt-[9px]">
        <Btn className="h-[21px] w-[73px]">OK</Btn>
        <Btn className="h-[21px] w-[73px]">Cancel</Btn>
        <Btn className="h-[21px] w-[73px]">Apply</Btn>
      </footer>
    </section>
  );
}

/* ---------- classification dialog ---------- */

function Histogram() {
  const ticksY = [1000, 800, 600, 400, 200, 0];
  const ticksX: [number, string, number][] = [
    [1199.5, '15.732852', 1200], [1293.5, '16308.675956', 1293], [1387.5, '32601.619061', 1387], [1481.5, '48894.562166', 1481], [1574.5, '65187.50527', 1570],
  ];
  const bars = [[1200, 773, 3], [1203, 923, 3], [1207, 943, 3], [1211, 950, 4], [1215, 951, 3], [1218, 952, 3], [1222, 953, 12], [1244, 953, 4], [1267, 953, 11]];
  return (
    <svg className="block" width="498" height="268" viewBox="1123 709 498 268" shapeRendering="crispEdges" fontFamily="Liberation Sans, sans-serif" fill="#111">
      {bars.map(([x, y, w]) => <rect key={x} x={x} y={y} width={w} height={954 - y} fill="#c0c0c0" />)}
      <path d="M1199.500 733v229M1199 954.500h376" stroke="#000" fill="none" />
      {ticksY.map((v) => {
        const y = Math.round(954 - (v / 1000) * 221) + 0.5;
        return (
          <g key={v}>
            {v > 0 && <path d={`M1194 ${y}h${v === 1000 ? 6 : 10}`} stroke="#000" />}
            <text x="1194" y={y + 3.5} fontSize="12" textAnchor="end">{v}</text>
          </g>
        );
      })}
      {ticksX.map(([x, t, c]) => (
        <g key={t}>
          <path d={`M${x} 954v8`} stroke="#000" />
          <text x={c} y="973" fontSize="12" textAnchor="middle" letterSpacing="0.15">{t}</text>
        </g>
      ))}
      <path d="M1214.500 773v181M1232.500 773v181M1251.500 773v181" stroke="#0000ff" />
      <path d="M1574.500 776v179" stroke="#ff7f7f" />
      <path d="M1574.500 734v42" stroke="#008080" />
      {([[1211, 772, '2612.356320'], [1229, 772, '5810.910895'], [1248, 772, '9009.465470'], [1571, 776, '65187.50527']] as [number, number, string][]).map(([x, y, t]) => (
        <text key={t} transform={`translate(${x} ${y}) rotate(-90)`} fontSize="11" letterSpacing="-0.02">{t}</text>
      ))}
    </svg>
  );
}

const STATS: [string, string][] = [
  ['Count:', '11'], ['Minimum:', '15.7328'], ['Maximum:', '65187.5052'], ['Sum:', '1136674.6745'], ['Mean:', '1013.0790'], ['Median:', '287.3944'],
];
const STAT_LEFT = ['pl-[184px]', 'pl-[156px]', 'pl-[137px]', 'pl-[126px]', 'pl-[144px]', 'pl-[149px]'];

function Classification() {
  return (
    <section className="absolute left-[1116px] top-[526px] flex h-[480px] w-[626px] flex-col overflow-hidden rounded-[8px] border border-[#c2c2c2] bg-[#f0f0f0] font-['Noto_Sans',sans-serif] text-[11px] tracking-[-0.3px] text-[#111]">
      <header className="flex h-[25px] shrink-0 items-center justify-between bg-white pl-[4px] pr-[9px]">
        <span className="font-['Open_Sans',sans-serif] text-[12px] tracking-[-0.35px] text-[#8c8c8c]">Classification</span>
        <CloseX />
      </header>
      <div className="flex h-[154px] shrink-0 pl-[5px] pt-[9px]">
        <div className="flex w-[363px] flex-col">
          <Group title="Classification" className="flex h-[58px] w-[363px] flex-col gap-[5px] bg-[#f0f0f0] pl-[13px] pt-[6px]">
            <div className="flex h-[21px] items-center">
              <span className="w-[62px]">Method:</span>
              <span className="flex h-[21px] w-[272px] items-center justify-between rounded-[2px] border border-[#e2e2e2] border-b-[#cfcfcf] bg-[#fbfbfb] pl-[3px] pr-[3px]">Standard Deviation<Chevron /></span>
            </div>
            <div className="flex h-[21px] items-center">
              <span className="w-[62px]">Classes:</span>
              <span className="flex h-[21px] w-[71px] items-center justify-between border border-[#b9b9b9] pl-[5px] pr-[3px] text-[#777]">4<Chevron dim /></span>
              <span className="ml-[2px] w-[115px] tracking-[-0.2px]">Interval Size:</span>
              <span className="flex h-[21px] w-[84px] items-center justify-between rounded-[2px] border border-[#e2e2e2] border-b-[#cfcfcf] bg-[#fbfbfb] pl-[4px] pr-[3px]"><span className="w-[17px]">1</span><span className="grow">Std Dev</span><Chevron /></span>
            </div>
          </Group>
          <Group title="Data Exclusion" className="mt-[7px] flex h-[48px] w-[363px] bg-[#f0f0f0] pl-[70px] pt-[15px]">
            <Btn className="h-[21px] w-[85px]">Exclusion ...</Btn>
            <Btn className="ml-[49px] h-[21px] w-[85px]">Sampling ...</Btn>
          </Group>
          <div className="mt-[10px] flex h-[20px] items-center">
            <span className="w-[65px]">Columns:</span>
            <span className="flex h-[20px] w-[29px] items-center border-b border-[#8a8a8a] bg-white pl-[5px]">100</span>
            <span className="flex h-[20px] w-[17px] flex-col justify-evenly border border-[#b0b0b0] bg-[#e6e6e6]">
              <svg width="15" height="8" viewBox="0 0 15 8"><path d="M5 5.500h5L7.500 3z" fill="#000" /></svg>
              <i className="h-px bg-[#9a9a9a]" />
              <svg width="15" height="8" viewBox="0 0 15 8"><path d="M5 3h5L7.500 5.500z" fill="#000" /></svg>
            </span>
            <span className="mt-[3px] flex items-center pl-[33px]">
              <Box /><span className="ml-[2px] w-[112px] tracking-[-0.1px]">Show Std. Dev.</span>
              <Box /><span className="ml-[2px]">Show Mean</span>
            </span>
          </div>
        </div>
        <Group title="Classification Statistics" className="ml-[19px] h-[139px] w-[231px] bg-[#f0f0f0] pl-[4px] pt-[10px]">
          <div className="flex h-[121px] w-[222px] flex-col border border-[#828790] bg-white p-px">
            <div className="flex grow">
              <div className="w-[202px] pl-[4px] leading-[17px] tracking-[-0.24px]">
                {STATS.map(([a, b], i) => (
                  <div key={a} className={'relative h-[17px] whitespace-nowrap ' + STAT_LEFT[i]}>
                    <span className="absolute left-0">{a}</span>
                    {b}
                  </div>
                ))}
              </div>
              <div className="w-[16px] bg-[#f0f0f0] pl-[7px] pt-[17px]"><i className="block h-[46px] w-[2px] bg-[#858585]" /></div>
            </div>
            <div className="h-[16px] bg-[#f0f0f0] pl-[17px] pt-[7px]"><i className="block h-[2px] w-[154px] bg-[#858585]" /></div>
          </div>
        </Group>
      </div>
      <div className="flex pl-[5px]">
        <div className="w-[511px] pt-[2px]">
          <div className="h-[270px] w-[500px] border border-b-[#e3e3e3] border-l-[#696969] border-r-[#e3e3e3] border-t-[#696969] bg-white">
            <Histogram />
          </div>
          <div className="flex h-[28px] items-center text-[#6d6d6d]">
            <Box dim />
            <span className="ml-[2px] w-[391px] tracking-[-0.28px]">Snap breaks to data values</span>
            <span className="whitespace-nowrap tracking-[-0.42px] text-[#111]">27 Elements in Class</span>
          </div>
        </div>
        <div className="flex w-[104px] flex-col">
          <div className="flex h-[21px] items-center justify-between pr-px">
            <span className="mt-[2px]">Break Values</span>
            <span className="flex h-[20px] w-[19px] items-center justify-center rounded-[3px] border border-[#e2e2e2] bg-[#f6f6f6] text-[12px]">%</span>
          </div>
          <div className="mt-[2px] flex h-[210px] w-[104px] flex-col border border-[#828790] bg-white px-px pb-px pt-px leading-[17px] tracking-[-0.05px]">
            {['4.007449', '8.914148', '13.820847'].map((v) => <div key={v} className="pl-[6px]">{v}</div>)}
            <div className="ml-[4px] w-[66px] bg-[#f0f0f0] pl-[2px]">100.000000</div>
            <div className="grow" />
            <div className="h-[16px] bg-[#f0f0f0] pl-[17px] pt-[7px]"><i className="block h-[2px] w-[40px] bg-[#858585]" /></div>
          </div>
          <Btn className="ml-[30px] mt-[9px] h-[21px] w-[73px]">OK</Btn>
          <Btn className="ml-[30px] mt-[10px] h-[21px] w-[73px]">Cancel</Btn>
        </div>
      </div>
    </section>
  );
}

/* ---------- main window ---------- */

const MENUS: [string, string][] = [
  ['File', 'w-[34px]'], ['Edit', 'w-[36px]'], ['View', 'w-[41px]'], ['Bookmarks', 'w-[75px]'], ['Insert', 'w-[45px]'],
  ['Selection', 'w-[64px]'], ['Geoprocessing', 'w-[94px]'], ['Customize', 'w-[72px]'], ['Windows', 'w-[65px]'], ['Help', ''],
];

export default function App() {
  return (
    <div className="relative flex h-[1036px] w-[1916px] flex-col overflow-hidden bg-[#f0f0f0] font-['Open_Sans',sans-serif] text-[11.500px] text-black">
      <header className="flex h-[23px] shrink-0 items-center bg-white pl-[2px]">
        <svg width="17" height="17" viewBox="0 0 17 17"><circle cx="8" cy="8" r="7.500" fill="#1d4f78" /><path d="M3 5l4-3 3 1-2 4-3 3zM11 10l3 1-2 3z" fill="#4fa06a" /><circle cx="9" cy="7" r="4" fill="#9fdcf0" stroke="#123" strokeWidth="1.300" /><path d="M11.500 10l5 6" stroke="#111" strokeWidth="2.200" /></svg>
        <span className="ml-[4px] grow text-[12px] tracking-[-0.16px] text-[#959595]">Municipios.mxd - ArcMap</span>
        <svg width="103" height="12" viewBox="0 0 103 12" className="mr-[14px] mt-[-3px]" fill="none" stroke="#8a8a8a" strokeWidth="1.100"><path d="M0 6.500h10M92 1l10 10M102 1L92 11" /><rect x="45.500" y="3.500" width="7.500" height="7.500" rx="1" /><path d="M47.500 3.500v-1.200q0-1 1-1h5q1.500 0 1.500 1.500v5q0 1-1 1h-1" /></svg>
      </header>
      <div className="flex h-[77px] shrink-0 flex-col bg-gradient-to-r from-[#f0f0f0] to-[#fcfcfc]">
        <nav className="flex h-[25px] items-center pl-[12px] pt-px tracking-[-0.2px]">
          {MENUS.map(([t, w]) => <span key={t} className={w}>{t}</span>)}
        </nav>
        <div className="flex h-[26px] items-center pl-[2px]">
          <StandardBar />
          <EditorBar />
        </div>
        <div className="flex h-[25px] items-center pl-[8px]">
          <ToolsBar />
        </div>
      </div>
      <div className="flex h-[911px] shrink-0">
        <Toc />
        <main className="flex w-[1624px] shrink-0 flex-col border-l-2 border-t-2 border-[#737373]">
          <div className="h-[891px] overflow-hidden border-b border-r border-[#e3e3e3] bg-[#fdfdfd]">
            <ColombiaMap />
          </div>
          <div className="flex h-[15px] items-center">
            <span className="flex h-[12px] w-[15px] items-center justify-center rounded-b border border-t-0 border-[#99d1ff] bg-[#cce8ff] pb-[2px]">
              <svg width="8" height="8" viewBox="0 0 8 8"><path d="M.5.5h7v7h-7z" fill="#d8e8a0" stroke="#333" /><path d="M2 6l4-4v2L4 6z" fill="#6fa040" /></svg>
            </span>
            <svg width="8" height="9" viewBox="0 0 8 9" className="mb-[2px] ml-[4px]"><path d="M.5.5h5l2 2v6h-7z" fill="#fff" stroke="#333" /><path d="M2 4h3M2 6h3" stroke="#2a69a8" /></svg>
            <i className="mb-[2px] ml-[5px] h-[10px] w-px bg-[#999]" />
            <svg width="9" height="9" viewBox="0 0 9 9" className="mb-[2px] ml-[8px]"><path d="M1 4c0-3 5-4 6.500-1.500M8 .5V3H5.500M8 5c0 3-5 4-6.500 1.500M1 8.500V6h2.500" stroke="#154a86" strokeWidth="1.200" fill="none" /></svg>
            <svg width="7" height="7" viewBox="0 0 7 7" className="mb-[2px] ml-[7px]"><path d="M0 0h2.500v7H0zM4 0h2.500v7H4z" fill="#15509a" /></svg>
            <i className="mt-px ml-[37px] h-[2px] w-[1502px] bg-[#808080]" />
          </div>
        </main>
        <div className="flex w-[13px] flex-col items-center border-t-2 border-[#737373] pt-[16px]">
          <i className="h-[857px] w-[2px] bg-[#858585]" />
        </div>
      </div>
      <footer className="flex h-[25px] shrink-0 flex-col">
        <div className="flex h-[22px] border-b border-[#e3e3e3] pl-[1515px] pt-[3px]">
          <i className="h-[18px] w-[127px] border border-[#f5f5f5]" />
          <i className="ml-[2px] h-[18px] w-[18px] border border-[#f5f5f5]" />
          <i className="ml-[2px] h-[18px] grow border border-r-0 border-[#f5f5f5]" />
        </div>
        <div className="grow bg-[#f3f3f3]" />
      </footer>
      <LayerProperties />
      <Classification />
    </div>
  );
}
